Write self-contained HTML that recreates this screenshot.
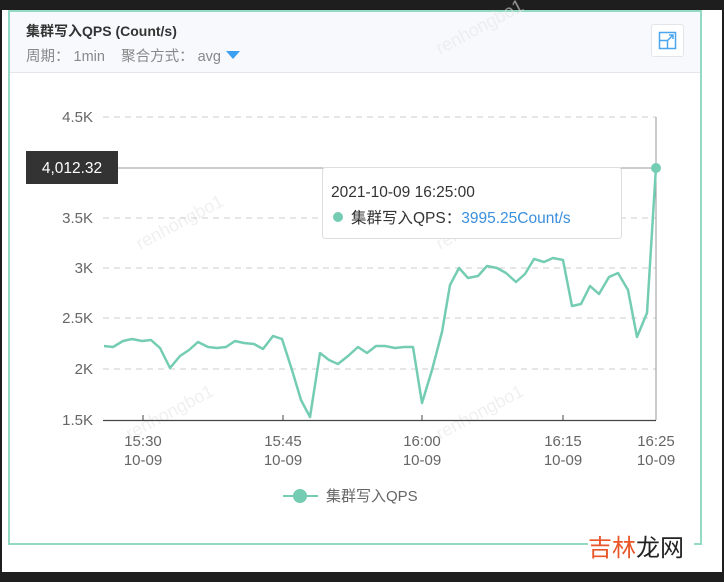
<!DOCTYPE html>
<html><head><meta charset="utf-8"><style>
html,body{margin:0;padding:0;}
body{width:724px;height:582px;background:#fff;position:relative;overflow:hidden;font-family:"Liberation Sans","Noto Sans CJK SC",sans-serif;}
.dark{position:absolute;background:#1e1e1e;}
.panel{position:absolute;left:8px;top:10px;width:694px;height:535px;border:2px solid #93d9c4;box-sizing:border-box;}
.hdr{position:absolute;left:0;top:0;right:0;height:60px;background:#f7f9fc;border-bottom:1px solid #e3e6ea;}
.t1{position:absolute;left:16px;top:9px;font-size:14px;font-weight:bold;color:#333;}
.t2{position:absolute;left:16px;top:33px;font-size:14.5px;color:#888;}
.btn{position:absolute;left:641px;top:12px;width:33px;height:33px;border:1px solid #e2e5ea;border-radius:3px;background:#fff;box-sizing:border-box;}
</style></head><body>
<div class="dark" style="left:0;top:0;width:724px;height:10px"></div>
<div class="dark" style="left:0;top:572px;width:724px;height:10px"></div>
<div class="dark" style="left:0;top:0;width:2px;height:582px"></div>
<div class="dark" style="left:722px;top:0;width:2px;height:582px"></div>
<div class="panel">
<div class="hdr">
<div class="t1">集群写入QPS (Count/s)</div>
<div class="t2">周期： 1min&nbsp;&nbsp;&nbsp; 聚合方式： avg <svg width="16" height="10" style="vertical-align:1px"><path d="M1 1 L15 1 L8 9 Z" fill="#3c9ff0"/></svg></div>
<div class="btn"><svg width="31" height="31" viewBox="0 0 31 31"><rect x="7.5" y="7.5" width="16" height="16" fill="none" stroke="#4aa6ee" stroke-width="1.5"/><path d="M7.5 15.5 H15.5 V23.5" fill="none" stroke="#4aa6ee" stroke-width="1.5"/><path d="M15 16 L21 10 M17 10 H21 V14" fill="none" stroke="#4aa6ee" stroke-width="1.5"/></svg></div>
</div>
</div>
<svg width="724" height="582" style="position:absolute;left:0;top:0" font-family="Liberation Sans, Noto Sans CJK SC, sans-serif">
<g fill="#e6e6e6" font-size="18" opacity="0.6">
<text x="440" y="55" transform="rotate(-28 440 55)">renhongbo1</text>
<text x="140" y="250" transform="rotate(-28 140 250)">renhongbo1</text>
<text x="440" y="250" transform="rotate(-28 440 250)">renhongbo1</text>
<text x="130" y="440" transform="rotate(-28 130 440)">renhongbo1</text>
<text x="440" y="440" transform="rotate(-28 440 440)">renhongbo1</text>
</g>
<g stroke="#ccc" stroke-dasharray="6,5" stroke-width="1">
<line x1="103" y1="117" x2="656" y2="117"/>
<line x1="103" y1="218" x2="656" y2="218"/>
<line x1="103" y1="268" x2="656" y2="268"/>
<line x1="103" y1="318" x2="656" y2="318"/>
<line x1="103" y1="369" x2="656" y2="369"/>
</g>
<line x1="103" y1="168" x2="656" y2="168" stroke="#999" stroke-width="1"/>
<line x1="656" y1="117" x2="656" y2="420" stroke="#999" stroke-width="1"/>
<line x1="103" y1="420.5" x2="656" y2="420.5" stroke="#444" stroke-width="1.2"/>
<g stroke="#444"><line x1="143" y1="415" x2="143" y2="420"/><line x1="283" y1="415" x2="283" y2="420"/><line x1="422" y1="415" x2="422" y2="420"/><line x1="563" y1="415" x2="563" y2="420"/></g>
<g fill="#666" font-size="15" text-anchor="end">
<text x="93" y="122">4.5K</text><text x="93" y="223">3.5K</text><text x="93" y="273">3K</text><text x="93" y="323">2.5K</text><text x="93" y="374">2K</text><text x="93" y="425">1.5K</text>
</g>
<g fill="#666" font-size="15" text-anchor="middle">
<text x="143" y="446">15:30</text><text x="143" y="465">10-09</text>
<text x="283" y="446">15:45</text><text x="283" y="465">10-09</text>
<text x="422" y="446">16:00</text><text x="422" y="465">10-09</text>
<text x="563" y="446">16:15</text><text x="563" y="465">10-09</text>
<text x="656" y="446">16:25</text><text x="656" y="465">10-09</text>
</g>
<polyline fill="none" stroke="#74cdb3" stroke-width="2.5" stroke-linejoin="round" points="104,346 113,347 123,341 132,339 142,341 151,340 160,348 170,368 180,356 189,350 198,342 208,347 217,348 226,347 235,341 244,343 254,344 263,349 273,336 282,339 292,370 301,400 310,417 320,353 329,360 338,364 348,356 358,347 367,353 376,346 385,346 395,348 404,347 413,347 422,403 432,370 442,332 450,285 459,268 468,278 478,276 487,266 497,268 506,273 516,282 525,274 534,259 544,262 553,258 563,260 572,306 581,304 590,286 599,294 609,277 618,273 628,290 637,337 647,313 656,167"/>
<circle cx="656" cy="168" r="5" fill="#74cdb3"/>
<rect x="26" y="151" width="92" height="33" fill="#333"/>
<text x="72" y="173" fill="#fff" font-size="15.5" text-anchor="middle">4,012.32</text>
<rect x="322.5" y="167.5" width="299" height="71" rx="3" fill="#fff" stroke="#ddd"/>
<text x="331" y="197" fill="#333" font-size="15.5">2021-10-09 16:25:00</text>
<circle cx="338" cy="217" r="5" fill="#74cdb3"/>
<text x="351" y="223" fill="#333" font-size="15.5">集群写入QPS：<tspan fill="#3b8fdc">3995.25Count/s</tspan></text>
<line x1="283" y1="496" x2="318" y2="496" stroke="#74cdb3" stroke-width="2"/>
<circle cx="300" cy="496" r="7" fill="#74cdb3"/>
<text x="326" y="501" fill="#666" font-size="15">集群写入QPS</text>
<rect x="588" y="533" width="106" height="28" fill="#fff"/>
<text x="588" y="556" font-size="24" fill="#e8562a">吉林<tspan fill="#222">龙网</tspan></text>
</svg>
</body></html>
